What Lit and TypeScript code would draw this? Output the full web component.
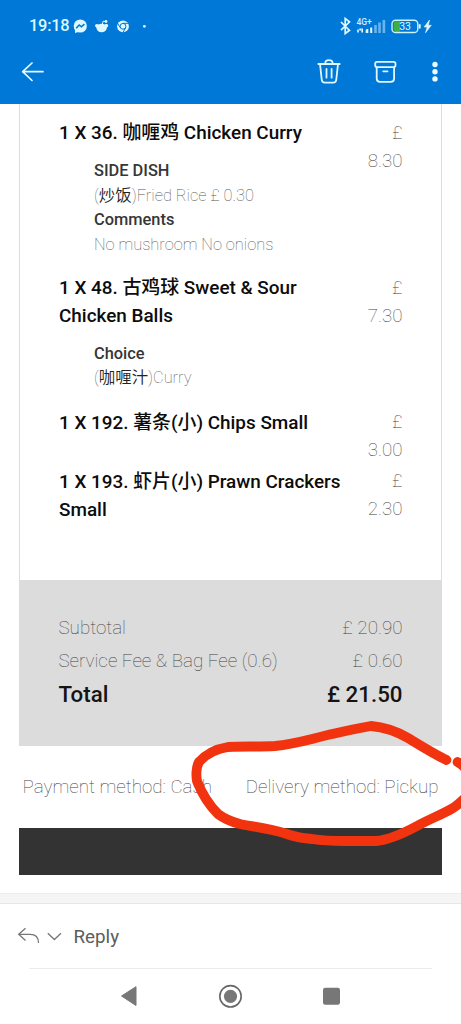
import { LitElement, html, css, svg, nothing } from "lit";
import { customElement } from "lit/decorators.js";

interface Option { label: string; cjk?: string; text: string }
interface Item { lines: string[]; price: string; options: Option[]; cls: string }

const ITEMS: Item[] = [
  {
    lines: ["1 X 36. 咖喱鸡 Chicken Curry"], price: "8.30", cls: "first",
    options: [
      { label: "SIDE DISH", cjk: "炒饭", text: "Fried Rice £ 0.30" },
      { label: "Comments", text: "No mushroom No onions" },
    ],
  },
  {
    lines: ["1 X 48. 古鸡球 Sweet & Sour", "Chicken Balls"], price: "7.30", cls: "second",
    options: [{ label: "Choice", cjk: "咖喱汁", text: "Curry" }],
  },
  { lines: ["1 X 192. 薯条(小) Chips Small"], price: "3.00", options: [], cls: "third" },
  { lines: ["1 X 193. 虾片(小) Prawn Crackers", "Small"], price: "2.30", options: [], cls: "" },
];

@customElement("status-bar")
class StatusBar extends LitElement {
  static styles = css`
    :host { display: flex; height: 50px; align-items: center; color: #dff8ff; padding: 2px 28px 0 29px; box-sizing: border-box; }
    .time { font-size: 16.4px; font-weight: 500; letter-spacing: -.25px; width: 44px; white-space: nowrap; line-height: 20px; }
    .left, .right { display: block; flex: none; }
    .grow { flex: 1; }
    .tiny { font: 500 8.6px Roboto, sans-serif; }
    .level { font: 400 10.5px Roboto, sans-serif; }
  `;
  render() {
    return html`
      <span class="time">19:18</span>
      <svg class="left" width="76" height="20" viewBox="73 15 76 20" fill="#dff8ff">
        <circle cx="80.3" cy="25" r="6.6" /><path d="M75 27v5l4-1.3z" />
        <path d="M76.2 27.2l3-3.2 2.2 1.8 3-2.7" fill="none" stroke="#0078d4" stroke-width="1.6" />
        <path d="M95.3 23.8c.8-1.200 2.200-1 3-.4 1.600-.8 4.900-.8 6.500 0 1.100-.7 2.800-.5 3.300.6.3 1-.2 2-1.100 2.200-.3 3.200-2.600 5.100-5.400 5.100s-5.100-1.900-5.400-5c-1.100-.4-1.500-1.500-.9-2.500z" />
        <path d="M102.300 23.500l.8-3.300 2.600.5" fill="none" stroke="#dff8ff" stroke-width="1" />
        <circle cx="106" cy="20.500" r="1.400" />
        <circle cx="123" cy="25.300" r="5.900" />
        <circle cx="123" cy="25.300" r="2.900" fill="none" stroke="#0078d4" stroke-width="1" />
        <path d="M123 22.300h5.200M120.400 26.800l-2.700-4.400M125.600 26.800l-2.600 4.500" stroke="#0078d4" stroke-width="1" />
        <circle cx="144.400" cy="25.300" r="1.400" />
      </svg>
      <span class="grow"></span>
      <svg class="right" width="95" height="20" viewBox="338 15 95 20">
        <path d="M341 21l8.500 8.300-4.300 3.200V17.500l4.300 3.300-8.500 8.400" fill="none" stroke="#dff8ff" stroke-width="1.700" />
        <text class="tiny" x="356.400" y="24.300" fill="#c9f1ff" textLength="15.500" lengthAdjust="spacingAndGlyphs">4G+</text>
        <path d="M358 28.500v3M362.200 27.500v4M366.500 29v3" stroke="#dff8ff" stroke-width="1.600" />
        <path d="M360.300 27.500v2M371.200 26.500v5.500M367.300 28v4" stroke="#dff8ff" stroke-width="2" />
        <path d="M375.500 24v8M379.500 21.500v10.500M383.900 19v13" stroke="#69b4ee" stroke-width="2.600" />
        <path d="M396 20.300h4v10.400h-4q-2.300 0-2.300-2.500v-5.400q0-2.500 2.300-2.500z" fill="#3fae49" />
        <rect x="392" y="19.200" width="25.800" height="12.300" rx="3.600" fill="none" stroke="#c9f3f4" stroke-width="1.400" />
        <path d="M419.700 23.200v4.300" stroke="#dff8ff" stroke-width="1.900" />
        <text class="level" x="399.200" y="29.100" fill="#dff8ff">33</text>
        <path d="M429.500 19l-5.300 7h3l-1.700 5.800 5.800-7.500h-3z" fill="#dff8ff" stroke="#dff8ff" stroke-width=".6" />
      </svg>`;
  }
}

@customElement("tool-bar")
class ToolBar extends LitElement {
  static styles = css`
    :host { display: flex; height: 54px; box-sizing: border-box; padding: 6px 20px 0 20px; align-items: flex-start; }
    svg { flex: none; }
    .grow { flex: 1; }
  `;
  render() {
    return html`
      <svg width="26" height="32" viewBox="20 56 26 32" fill="none" stroke="#e9fbff" stroke-width="1.700" stroke-linecap="round" stroke-linejoin="round">
        <path d="M32 63l-9.300 8.700L32 80.500M22.700 71.700H43" />
      </svg>
      <span class="grow"></span>
      <svg width="129" height="32" viewBox="312 56 129 32" fill="none" stroke="#dff8ff" stroke-width="1.800" stroke-linecap="round" stroke-linejoin="round">
        <path d="M318.300 64h21.400M325.200 63.500c0-4.500 7.500-4.500 7.500 0M320 64l1.700 15.500q.3 3.200 3 3.200h8.600q2.700 0 3-3.200L338 64M326.500 69v8.700M331.600 69v8.700" />
        <rect x="375.200" y="61.800" width="20.300" height="5.400" rx="1.900" />
        <path d="M376.700 67.300V78.500q0 3.300 3.300 3.300h10.800q3.300 0 3.300-3.300V67.300M383.200 71.300h4.300" />
        <g fill="#e9fbff" stroke="none"><circle cx="435" cy="64.500" r="2.700" /><circle cx="435" cy="71.700" r="2.700" /><circle cx="435" cy="78.900" r="2.700" /></g>
      </svg>`;
  }
}

@customElement("order-item")
class OrderItem extends LitElement {
  static properties = { item: { attribute: false } };
  declare item: Item;
  static styles = css`
    :host { display: block; }
    .row { display: flex; justify-content: space-between; line-height: 28px; font-size: 18.7px; white-space: nowrap; }
    .name { font-size: 18.9px; font-weight: 500; color: #0c0c0c; }
    .plain { padding-top: 1px; }
    .price { font-weight: 100; color: #444; text-align: right; }
    .opts { padding-left: 35px; margin-top: -16px; line-height: 24.6px; font-size: 16.4px; font-weight: 100; color: #555; white-space: nowrap; }
    .opts.after2 { margin-top: 11.5px; }
    .label { font-weight: 500; color: #363636; }
    .cjk { color: #222; font-weight: 350; }
  `;
  render() {
    const it = this.item;
    return html`
      <div class="row">
        <div class="name ${it.options.length ? "" : "plain"}">${it.lines.map((l) => html`<div>${l}</div>`)}</div>
        <div class="price"><div>£</div><div>${it.price}</div></div>
      </div>
      ${it.options.length
        ? html`<div class="opts ${it.lines.length > 1 ? "after2" : ""}">
            ${it.options.map((o) => html`
              <div class="label">${o.label}</div>
              <div>${o.cjk ? html`(<span class="cjk">${o.cjk}</span>)` : nothing}${o.text}</div>`)}
          </div>`
        : nothing}`;
  }
}

@customElement("app-root")
class AppRoot extends LitElement {
  static styles = css`
    :host { display: flex; flex-direction: column; position: relative; width: 461px; height: 1024px; overflow: hidden; background: #fff; font-family: Roboto, "Noto Sans CJK SC", sans-serif; }
    .head { background: #0078d7; height: 104px; flex: none; }
    .card { margin: 0 19px; border: 1px solid #dcdcdc; border-width: 0 1px; height: 476px; box-sizing: border-box; padding: 15px 38.5px 0 39px; flex: none; }
    .first { margin-bottom: 17px; }
    .second { margin-bottom: 17px; }
    .third { margin-bottom: 3px; }
    .totals { background: #dcdcdc; margin: 0 19px; height: 166px; box-sizing: border-box; padding: 32px 39.5px 0 39.5px; font-size: 18.8px; font-weight: 100; color: #444; flex: none; }
    .line { display: flex; justify-content: space-between; line-height: 32.7px; white-space: nowrap; }
    .total { font-size: 22.3px; font-weight: 500; color: #141414; line-height: 35px; }
    .methods { display: flex; justify-content: space-between; height: 82px; line-height: 82px; padding: 0 22.5px 0 22.5px; font-size: 18.8px; font-weight: 100; color: #444; white-space: nowrap; flex: none; }
    .dark { background: #333; height: 47px; margin: 0 19px; flex: none; }
    .strip { margin-top: 18px; height: 9px; background: #f5f5f5; border-top: 1px solid #ececec; border-bottom: 1px solid #e6e6e6; flex: none; }
    .reply { display: flex; height: 64px; align-items: center; margin: 0 29px; border-bottom: 1px solid #ececec; flex: none; }
    .reply svg { margin-left: -13px; flex: none; }
    .word { font-size: 18.8px; color: #5c5c5c; font-weight: 380; margin-left: 9.5px; padding-top: 2px; }
    .nav { height: 55px; flex: none; display: block; }
    .mark { position: absolute; left: 0; top: 0; pointer-events: none; }
  `;
  render() {
    return html`
      <div class="head"><status-bar></status-bar><tool-bar></tool-bar></div>
      <div class="card">${ITEMS.map((i) => html`<order-item class=${i.cls} .item=${i}></order-item>`)}</div>
      <div class="totals">
        <div class="line"><span>Subtotal</span><span>£ 20.90</span></div>
        <div class="line"><span>Service Fee &amp; Bag Fee (0.6)</span><span>£ 0.60</span></div>
        <div class="line total"><span>Total</span><span>£ 21.50</span></div>
      </div>
      <div class="methods"><span>Payment method: Cash</span><span>Delivery method: Pickup</span></div>
      <div class="dark"></div>
      <div class="strip"></div>
      <div class="reply">
        <svg width="48" height="24" viewBox="16 925 48 24" fill="none" stroke="#777" stroke-width="1.3">
          <path d="M25.500 929.300l-6.800 6 6.800 6.200M18.700 935.300h11.500q8.300 0 8.300 8.700M47.800 934.200l6.600 6.300 6.600-6.300" />
        </svg>
        <span class="word">Reply</span>
      </div>
      <svg class="nav" width="461" height="55" viewBox="0 969 461 55" fill="#777">
        <path d="M121.500 996l14.500-9.300v18.800z" stroke="#777" stroke-linejoin="round" />
        <circle cx="230.500" cy="996.300" r="10.700" fill="none" stroke="#666" stroke-width="1.600" />
        <circle cx="230.500" cy="996.300" r="6.600" />
        <rect x="323" y="987.800" width="17" height="17" rx="2.200" />
      </svg>
      <svg class="mark" width="461" height="1024" viewBox="0 0 461 1024" fill="none" stroke="#f1330f" stroke-width="9.800" stroke-linecap="round" stroke-linejoin="round">
        ${svg`<path d="M446.500 760C434 754 418 744 408 738C396 731 383 727 371 726C350 730 330 734 312 739C296 743 286 745 275 746C256 747 243 746 228 747C216 749 206 754 199 762C196 767 196 776 197 781C202 794 210 806 218 814C226 820 232 822 240 824C256 827 270 829 284 833C296 837 300 838 312 839C325 841 335 841 345 841H376C389 840 404 833 417 826C430 819 443 814 453 808C458 805 462 801 465 798M457.500 762Q463 765 467 770" />`}
      </svg>`;
  }
}
